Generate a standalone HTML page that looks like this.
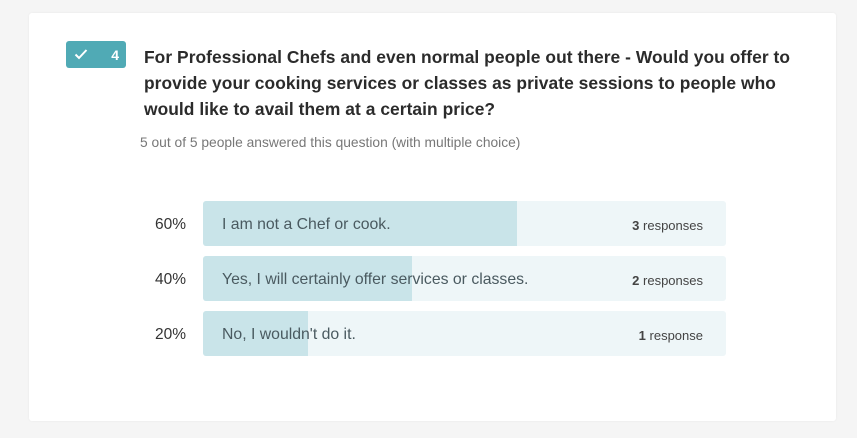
<!DOCTYPE html>
<html><head><style>
body{margin:0;background:#f5f5f5;font-family:"Liberation Sans",sans-serif;width:857px;height:438px;overflow:hidden;position:relative}
.card{position:absolute;left:29px;top:13px;width:807px;height:408px;background:#fff;border-radius:3px;box-shadow:0 0 2px rgba(0,0,0,.06)}
.badge{position:absolute;left:66px;top:41px;width:60px;height:27px;background:#50aab5;border-radius:3px;color:#fff}
.badge b{position:absolute;right:7px;top:6px;font-size:14px}
.title{position:absolute;left:144px;top:44px;width:680px;font-size:17.4px;font-weight:bold;line-height:26px;color:#2b2b2b;letter-spacing:.05px}
.sub{position:absolute;left:140px;top:135px;font-size:13.8px;color:#777}
.row{position:absolute;left:203px;width:523px;height:45px;background:#eef6f8;border-radius:3px;overflow:hidden}
.fill{position:absolute;left:0;top:0;bottom:0;background:#c9e4e9}
.lbl{position:absolute;left:19px;top:15px;font-size:15.8px;color:#4a5a60}
.cnt{position:absolute;right:23px;top:17px;font-size:13px;color:#444}
.pct{position:absolute;left:145px;font-size:15.5px;color:#333;width:41px;text-align:right}
</style></head><body>
<div class="card"></div>
<div class="badge"><svg style="position:absolute;left:8px;top:7px" width="14" height="12" viewBox="0 0 14 12"><path d="M1.5 6.5 L5 10 L12.5 2" stroke="#fff" stroke-width="2" fill="none"/></svg><b>4</b></div>
<div class="title">For Professional Chefs and even normal people out there - Would you offer to provide your cooking services or classes as private sessions to people who would like to avail them at a certain price?</div>
<div class="sub">5 out of 5 people answered this question (with multiple choice)</div>
<div class="pct" style="top:216px">60%</div>
<div class="row" style="top:201px"><div class="fill" style="width:314px"></div><div class="lbl">I am not a Chef or cook.</div><div class="cnt"><b>3</b> responses</div></div>
<div class="pct" style="top:271px">40%</div>
<div class="row" style="top:256px"><div class="fill" style="width:209px"></div><div class="lbl">Yes, I will certainly offer services or classes.</div><div class="cnt"><b>2</b> responses</div></div>
<div class="pct" style="top:326px">20%</div>
<div class="row" style="top:311px"><div class="fill" style="width:105px"></div><div class="lbl">No, I wouldn't do it.</div><div class="cnt"><b>1</b> response</div></div>
</body></html>
